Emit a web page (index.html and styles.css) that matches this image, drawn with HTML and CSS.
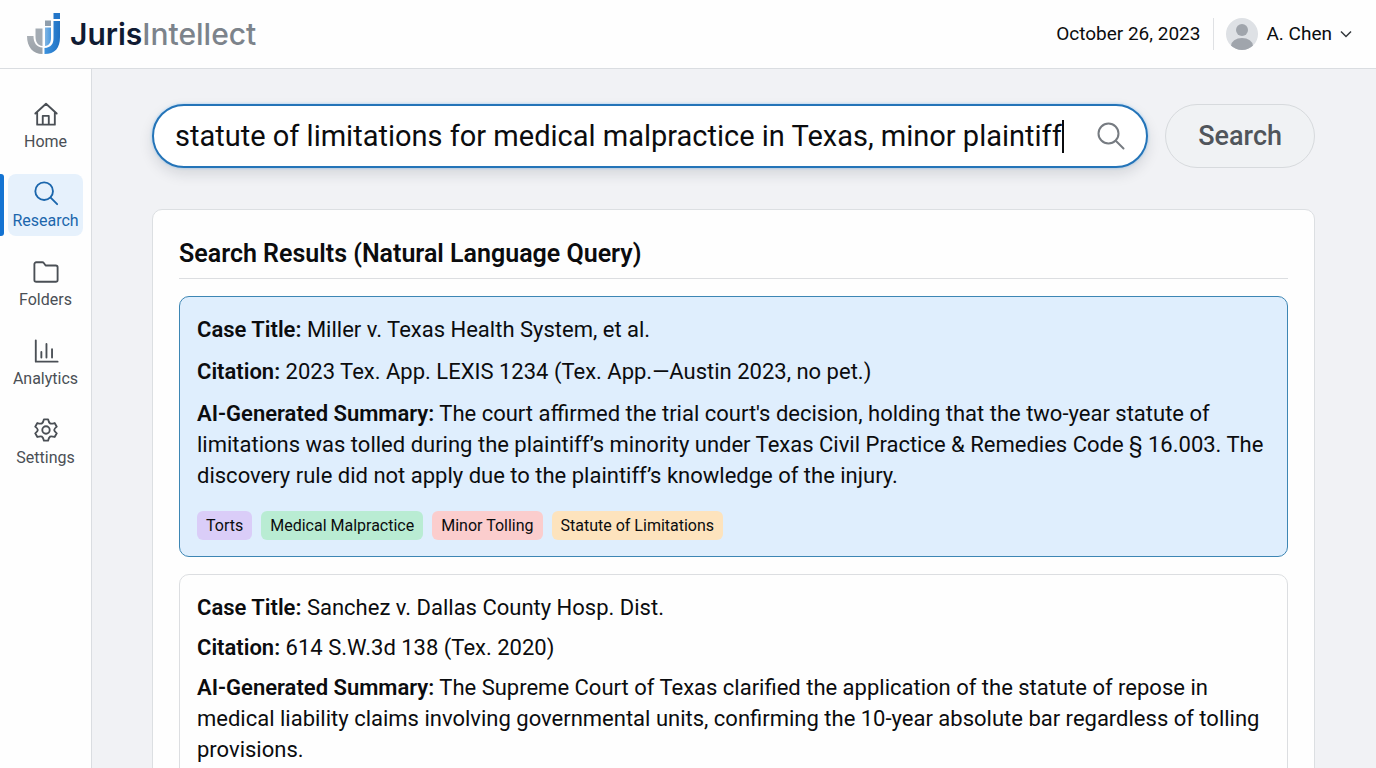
FILE: index.html
```html
<!DOCTYPE html>
<html lang="en">
<head>
<meta charset="utf-8">
<meta name="viewport" content="width=device-width, initial-scale=1">
<title>JurisIntellect – Research</title>
<link rel="stylesheet" href="styles.css">
</head>
<body>
<div class="app">
  <header class="topbar">
    <a class="brand" href="#">
      <svg class="brand-mark" viewBox="0 0 34 42" aria-hidden="true">
        <defs>
          <linearGradient id="blue" x1="0" y1="0" x2="1" y2="0"><stop offset="0" stop-color="#3c92de"/><stop offset="1" stop-color="#1f72c4"/></linearGradient>
          <linearGradient id="inner" x1="0" y1="0" x2="1" y2="0"><stop offset="0" stop-color="#7fb4e2"/><stop offset="1" stop-color="#4b9ae0"/></linearGradient>
          <linearGradient id="grey" x1="0" y1="0" x2="0" y2="1"><stop offset="0" stop-color="#aab0b6"/><stop offset="1" stop-color="#99a0a7"/></linearGradient>
        </defs>
        <path fill="url(#grey)" d="M0 23H6.500C6.500 30 9.500 34 15.500 34.500V41C6 41 0 34 0 23Z"/>
        <path fill="#a3abb3" d="M8.500 15.500H15.500V33C10.500 32.500 8.500 29 8.500 23Z"/>
        <path fill="#8f9eac" d="M18 7.500H24V13H18Z"/>
        <path fill="url(#inner)" d="M18 14.500H24V25C24 29.500 22 32.500 18 33Z"/>
        <path fill="#2376c9" d="M26.500 0H33V6H26.500Z"/>
        <path fill="url(#blue)" d="M26.500 8H33V24C33 35 28 41 17.500 41V35C24 34.500 26.500 31 26.500 25Z"/>
      </svg>
      <span class="brand-name">Juris<span class="brand-soft">Intellect</span></span>
    </a>
    <div class="account">
      <time class="date" datetime="2023-10-26">October 26, 2023</time>
      <button class="user" type="button">
        <svg class="avatar" viewBox="0 0 32 32" aria-hidden="true">
          <defs><clipPath id="disc"><circle cx="16" cy="16" r="16"/></clipPath></defs>
          <g clip-path="url(#disc)"><rect width="32" height="32" fill="#dee1e5"/><circle cx="16" cy="12" r="6" fill="#a0a5ac"/><ellipse cx="16" cy="28" rx="11" ry="8" fill="#a0a5ac"/></g>
        </svg>
        <span>A. Chen</span>
        <svg class="chevron" viewBox="0 0 12 8" aria-hidden="true"><path d="M1 1.500l5 5 5-5"/></svg>
      </button>
    </div>
  </header>
  <nav class="sidebar" aria-label="Main">
    <a class="nav-item" href="#"><svg class="icon" viewBox="0 0 28 28" aria-hidden="true"><path d="M2.500 13.500L14 3l11.500 10.500M4.500 12v13.500h19V12M10.500 25.500V16h6.500v9.500"/></svg><span>Home</span></a>
    <a class="nav-item active" href="#" aria-current="page"><svg class="icon" viewBox="0 0 28 28" aria-hidden="true"><circle cx="12" cy="12" r="9.500"/><path d="M19 19l7 7"/></svg><span>Research</span></a>
    <a class="nav-item" href="#"><svg class="icon" viewBox="0 0 28 28" aria-hidden="true"><path d="M1.500 22.500V5.500a2 2 0 0 1 2-2h6.500q1 0 1.600.8l2 2.700H24.500a2 2 0 0 1 2 2V22.500a2 2 0 0 1-2 2H3.500a2 2 0 0 1-2-2z"/></svg><span>Folders</span></a>
    <a class="nav-item" href="#"><svg class="icon" viewBox="0 0 28 28" aria-hidden="true"><path d="M3 2.500v23h23.500M9 21v-6M14.500 21V6.500M20.500 21v-9"/></svg><span>Analytics</span></a>
    <a class="nav-item" href="#"><svg class="icon" viewBox="0 0 28 28" aria-hidden="true"><circle cx="14" cy="14" r="4"/><path d="M11.800 2.500h4.400q.8 3.600 2.200 4.400t4.900-.4l2.300 3.900q-2.800 2.300-2.800 3.600t2.800 3.600l-2.300 3.900q-3.500-1.200-4.900-.4t-2.200 4.400h-4.400q-.8-3.600-2.200-4.400t-4.900.4l-2.300-3.900q2.800-2.300 2.800-3.600t-2.800-3.600l2.300-3.900q3.500 1.200 4.900.4t2.200-4.400z"/></svg><span>Settings</span></a>
  </nav>
  <main class="content">
    <form class="search" role="search">
      <div class="search-field">
        <input class="search-input" type="text" aria-label="Search query" value="statute of limitations for medical malpractice in Texas, minor plaintiff">
        <span class="caret"></span>
        <svg class="search-icon" viewBox="0 0 28 28" aria-hidden="true"><circle cx="11.500" cy="11.500" r="10"/><path d="M19 19l7.500 7.500"/></svg>
      </div>
      <button class="search-button" type="button">Search</button>
    </form>
    <section class="panel">
      <h1 class="panel-title">Search Results (Natural Language Query)</h1>
      <article class="result selected">
        <p><strong>Case Title:</strong> Miller v. Texas Health System, et al.</p>
        <p><strong>Citation:</strong> 2023 Tex. App. LEXIS 1234 (Tex. App.—Austin 2023, no pet.)</p>
        <p><strong>AI-Generated Summary:</strong> The court affirmed the trial court's decision, holding that the two-year statute of limitations was tolled during the plaintiff’s minority under Texas Civil Practice &amp; Remedies Code § 16.003. The discovery rule did not apply due to the plaintiff’s knowledge of the injury.</p>
        <ul class="tags">
          <li class="tag violet">Torts</li>
          <li class="tag green">Medical Malpractice</li>
          <li class="tag red">Minor Tolling</li>
          <li class="tag amber">Statute of Limitations</li>
        </ul>
      </article>
      <article class="result">
        <p><strong>Case Title:</strong> Sanchez v. Dallas County Hosp. Dist.</p>
        <p><strong>Citation:</strong> 614 S.W.3d 138 (Tex. 2020)</p>
        <p><strong>AI-Generated Summary:</strong> The Supreme Court of Texas clarified the application of the statute of repose in medical liability claims involving governmental units, confirming the 10-year absolute bar regardless of tolling provisions.</p>
      </article>
    </section>
  </main>
</div>
</body>
</html>
```
FILE: styles.css
```css
* { box-sizing: border-box; }
body {
  margin: 0;
  font-family: Roboto, Inter, "Liberation Sans", sans-serif;
  color: #0b0c0e;
  background: #f1f2f5;
}
button, input { font: inherit; color: inherit; }
a { color: inherit; text-decoration: none; }

.app {
  display: grid;
  grid-template: auto minmax(0, 1fr) / 92px minmax(0, 1fr);
  height: 100vh;
}

.topbar {
  grid-column: 1 / -1;
  display: flex;
  align-items: center;
  justify-content: space-between;
  padding: 13px 24px;
  background: #fefefe;
  border-bottom: 1px solid #dadde1;
}
.brand { display: flex; align-items: center; gap: 9px; }
.brand-mark { width: 34px; height: 42px; }
.brand-name { font: 600 30px/40px Inter, sans-serif; color: #101b33; }
.brand { padding-left: 3px; }
.brand-soft { font-weight: 500; color: #7c838b; }

.account { display: flex; align-items: center; gap: 13px; font-size: 19px; line-height: 32px; }
.user {
  display: flex;
  align-items: center;
  gap: 8px;
  padding: 0 0 0 12px;
  border: 0;
  border-left: 1px solid #dfe1e4;
  background: none;
}
.avatar { width: 32px; height: 32px; }
.chevron { width: 12px; height: 8px; fill: none; stroke: #33373c; stroke-width: 1.500; }

.sidebar {
  display: flex;
  flex-direction: column;
  gap: 17px;
  padding: 26px 8px 0;
  background: #fefefe;
  border-right: 1px solid #dadde1;
}
.nav-item {
  position: relative;
  display: flex;
  flex-direction: column;
  align-items: center;
  gap: 5px;
  padding: 6px 0 5px;
  border-radius: 8px;
  font-size: 16px;
  line-height: 20px;
  color: #4a4f55;
}
.icon { width: 26px; height: 26px; fill: none; stroke: currentColor; stroke-width: 2; stroke-linejoin: round; stroke-linecap: round; }
.nav-item.active { background: #e6f1fc; color: #1b66ac; }
.nav-item.active::before {
  content: "";
  position: absolute;
  inset: 0 auto 0 -8px;
  width: 4px;
  border-radius: 0 3px 3px 0;
  background: #1473d2;
}

.content { padding: 35px 61px 0 60px; overflow-y: auto; scrollbar-width: none; }
.search { display: flex; gap: 17px; margin-bottom: 41px; }
.search-field {
  flex: 1;
  display: flex;
  align-items: center;
  height: 64px;
  padding: 0 21px;
  background: #fff;
  border: 2px solid #2474b8;
  border-radius: 32px;
  box-shadow: 0 6px 14px rgba(20, 30, 50, .13), 0 0 3px #9fd0f8;
}
.search-input {
  flex: 0 1 auto;
  field-sizing: content;
  min-width: 0;
  padding: 0;
  border: 0;
  outline: 0;
  background: none;
  font-size: 29px;
  line-height: 36px;
}
.caret { flex: none; width: 2px; height: 33px; background: #0b0c0e; }
.search-icon { flex: none; width: 28px; height: 28px; margin-left: auto; fill: none; stroke: #767b81; stroke-width: 2; stroke-linecap: round; }
.search-button {
  padding: 0 32px;
  border: 1px solid #d7dadd;
  border-radius: 32px;
  background: #f0f2f4;
  font-size: 27px;
  font-weight: 500;
  color: #50555b;
}

.panel {
  padding: 26px;
  background: #fefefe;
  border: 1px solid #dcdfe2;
  border-radius: 10px;
}
.panel-title {
  margin: 0 0 17px;
  padding: 2px 0 8px;
  border-bottom: 1px solid #dcdee1;
  font-size: 25px;
  line-height: 32px;
  font-weight: 600;
}
.result {
  margin-bottom: 17px;
  padding: 17px 17px 16px;
  border: 1px solid #dcdee1;
  border-radius: 10px;
  font-size: 22px;
  line-height: 31px;
}
.result p { margin: 0 0 9px; }
.result strong { font-weight: 600; }
.result.selected { background: #dfeefd; border-color: #3d86b4; }
.result.selected p { margin-bottom: 11px; }
.tags { display: flex; flex-wrap: wrap; gap: 9px; margin: 20px 0 0; padding: 0; list-style: none; }
.tag { padding: 0 9px; border-radius: 6px; font-size: 16px; line-height: 29px; }
.violet { background: #dacdf8; }
.green { background: #b9ecd3; }
.red { background: #fbcdcd; }
.amber { background: #fde3bd; }
```
